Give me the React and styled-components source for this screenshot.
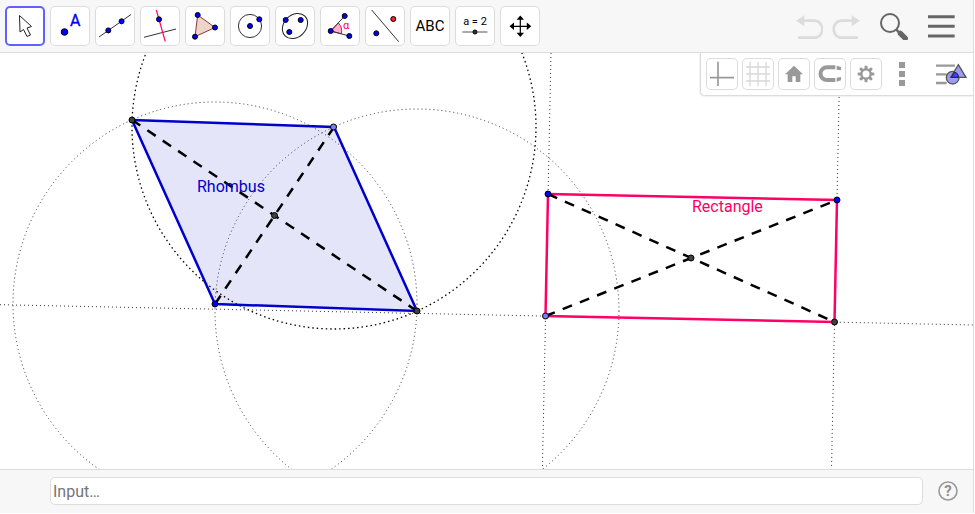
import React from 'react'
import styled, { createGlobalStyle } from 'styled-components';

const BLUE = '#0000ff';
const DARK = '#404040';
const LIGHT = '#7d7dff';
const PINK = '#ff0066';

const Dot = ({ x, y, r = 2.5, fill = BLUE }) => (
    <circle cx={x} cy={y} r={r} fill={fill} stroke="#000" strokeWidth="1" />
)

const tools = [
    {
        name: 'Move',
        icon: <path d="M14.5 9.5 L15 26 L18.5 23.5 L22 30.5 L25.5 29 L22 22 L26.5 20.5 Z" fill="#fff" stroke="#222" strokeWidth="1" />,
    },
    {
        name: 'Point',
        icon: <>
            <Dot x={14.5} y={26} r={3.3} />
            <text x="20" y="20" fontSize="16" fill="#0000ee" stroke="#0000ee" strokeWidth="0.3">A</text>
        </>,
    },
    {
        name: 'Line',
        icon: <>
            <path d="M4 31 L36 8.5" stroke="#333" />
            <Dot x={13.3} y={24.4} />
            <Dot x={26.6} y={15.3} />
        </>,
    },
    {
        name: 'Perpendicular Line',
        icon: <>
            <path d="M4 31.3 L36 23" stroke="#333" />
            <path d="M16.3 4 L25.3 35.7" stroke={PINK} strokeWidth="1.2" />
            <Dot x={19} y={13.3} />
        </>,
    },
    {
        name: 'Polygon',
        icon: <>
            <path d="M12.7 9 L30 21.5 L10 30.7 Z" fill="#993300" fillOpacity="0.2" stroke="#993333" />
            <Dot x={12.7} y={9} />
            <Dot x={30} y={21.5} />
            <Dot x={10} y={30.7} />
        </>,
    },
    {
        name: 'Circle with Center through Point',
        icon: <>
            <circle cx="20" cy="20" r="11.6" fill="none" stroke="#333" />
            <Dot x={20} y={20} />
            <Dot x={29.3} y={13.3} />
        </>,
    },
    {
        name: 'Ellipse',
        icon: <>
            <ellipse cx="20" cy="20" rx="14" ry="11" transform="rotate(-45 20 20)" fill="none" stroke="#222" />
            <Dot x={10.7} y={14} />
            <Dot x={25.7} y={14} />
            <Dot x={14.3} y={26} />
        </>,
    },
    {
        name: 'Angle',
        icon: <>
            <path d="M10.7 25 L18.2 17 A11 11 0 0 1 21.3 27.8 Z" fill="#ffb3cc" stroke={PINK} />
            <path d="M24.7 10 L10.7 25 L29.3 30" fill="none" stroke="#333" />
            <text x="23" y="23" fontSize="11" fill="#ff0044">α</text>
            <Dot x={24.7} y={10} />
            <Dot x={10.7} y={25} />
            <Dot x={29.3} y={30} />
        </>,
    },
    {
        name: 'Reflect about Line',
        icon: <>
            <path d="M6.7 4 L33.7 35.7" stroke="#333" />
            <Dot x={11.3} y={27.3} />
            <Dot x={28.3} y={13} fill="#ff2222" />
        </>,
    },
    {
        name: 'Text',
        icon: <text x="20" y="25" fontSize="15" textAnchor="middle" fill="#000">ABC</text>,
    },
    {
        name: 'Slider',
        icon: <>
            <text x="20" y="19" fontSize="11" textAnchor="middle" fill="#000">a = 2</text>
            <path d="M7.3 26 H32.5" stroke="#555" />
            <Dot x={20} y={26} r={2} fill="#333" />
        </>,
    },
    {
        name: 'Move Graphics View',
        icon: <>
            <path d="M12 20.3 H29 M20.3 12 V29" stroke="#000" strokeWidth="1.2" />
            <path d="M9.5 20.3 L14 16.6 V24 Z M31.3 20.3 L26.8 16.6 V24 Z M20.3 9.5 L16.6 13.8 H24 Z M20.3 31 L16.6 26.8 H24 Z" />
        </>,
    },
];

const viewTools = [
    {
        name: 'Axes',
        icon: <path d="M84 50 V123 M60 98 H132" stroke="#999" strokeWidth="5" />,
    },
    {
        name: 'Grid',
        icon: <path d="M180 51 V124 M204 51 V124 M228 51 V124 M168 66 H240 M168 87 H240 M168 108 H240" stroke="#d8d8d8" strokeWidth="4" />,
    },
    {
        name: 'Standard View',
        icon: <path d="M312 62 L339 88 H331 V111 H317 V94 H307 V111 H293 V88 H285 Z" fill="#999" />,
    },
    {
        name: 'Point Capturing',
        icon: <>
            <path d="M436 67 H414 C384 65 384 107 414 105 H436" fill="none" stroke="#999" strokeWidth="12" />
            <path d="M440 62 L453 66 V76 L440 74 Z M440 98 L453 96 V106 L440 110 Z" fill="#999" />
        </>,
    },
    {
        name: 'Settings',
        icon: <>
            <circle cx="528" cy="87" r="14" fill="none" stroke="#999" strokeWidth="7" />
            {[0, 45, 90, 135, 180, 225, 270, 315].map(a => (
                <path key={a} d="M524 62 H532 L533 73 H523 Z" fill="#999" transform={`rotate(${a} 528 87)`} />
            ))}
        </>,
    },
];

export default function App() {
    return (
        <Page>
            <GlobalStyle />
            <Toolbar>
                <ToolList>
                    {tools.map((t, i) => (
                        <ToolButton key={t.name} aria-label={t.name} $active={i === 0}>
                            <svg width="40" height="40" viewBox="0 0 40 40">{t.icon}</svg>
                        </ToolButton>
                    ))}
                </ToolList>
                <Actions>
                    <UndoGroup>
                        <ActionButton aria-label="Undo">
                            <svg width="28" height="28" viewBox="45 36 84 84">
                                <path d="M48 62 L73 46 V79 Z" fill="#dcdcdc" />
                                <path d="M70 62 H102 C135 62 135 113 102 113 H54" fill="none" stroke="#dcdcdc" strokeWidth="8" />
                            </svg>
                        </ActionButton>
                        <ActionButton aria-label="Redo">
                            <svg width="28" height="28" viewBox="159 36 84 84">
                                <path d="M243 62 L218 46 V79 Z" fill="#dcdcdc" />
                                <path d="M221 62 H189 C156 62 156 113 189 113 H237" fill="none" stroke="#dcdcdc" strokeWidth="8" />
                            </svg>
                        </ActionButton>
                    </UndoGroup>
                    <ActionButton aria-label="Search">
                        <svg width="28" height="28" viewBox="300 36 84 84">
                            <circle cx="330" cy="69" r="27" fill="none" stroke="#666" strokeWidth="6" />
                            <path d="M349 89 L360 100" stroke="#666" strokeWidth="7" />
                            <path d="M361 100 L376 115" stroke="#666" strokeWidth="16" strokeLinecap="round" />
                        </svg>
                    </ActionButton>
                    <ActionButton aria-label="Menu">
                        <svg width="28" height="28" viewBox="444 36 84 84">
                            <path d="M444 50 H524 M444 79 H524 M444 108 H524" stroke="#666" strokeWidth="9" />
                        </svg>
                    </ActionButton>
                </Actions>
            </Toolbar>

            <Graphics>
                <Drawing />
                <StyleBar>
                    {viewTools.map((t, i) => (
                        <StyleButton key={t.name} aria-label={t.name}>
                            <svg width="32" height="32" viewBox={`${48 + 108 * i} 39 96 96`}>{t.icon}</svg>
                        </StyleButton>
                    ))}
                    <PlainButton aria-label="More">
                        <svg width="32" height="32" viewBox="588 39 96 96">
                            <path d="M627 51 h18 v18 h-18 Z M627 78 h18 v18 h-18 Z M627 105 h18 v18 h-18 Z" fill="#999" />
                        </svg>
                    </PlainButton>
                    <PlainButton aria-label="Toggle Style Bar" $wide>
                        <svg width="32" height="32" viewBox="738 39 96 96">
                            <path d="M738 62 H795 M738 88 H770 M738 114 H770" stroke="#999" strokeWidth="7" />
                            <circle cx="788" cy="98" r="19" fill="#9c9cf5" stroke="#555" strokeWidth="4" />
                            <path d="M805 59 L828 97 H782 Z" fill="#9c9cf5" stroke="#555" strokeWidth="4" />
                            <path d="M794 81 Q805 84 806 97 H784 Z" fill="#4040ff" stroke="#222" strokeWidth="3" />
                        </svg>
                    </PlainButton>
                </StyleBar>
            </Graphics>

            <InputBar>
                <AlgebraInput aria-label="Input" placeholder="Input…" />
                <HelpButton aria-label="Help">
                    <svg width="22" height="22" viewBox="0 0 22 22">
                        <circle cx="11" cy="11" r="9" fill="none" stroke="#999" strokeWidth="1.6" />
                        <text x="11" y="16" fontSize="15" fontWeight="700" textAnchor="middle" fill="#909090">?</text>
                    </svg>
                </HelpButton>
            </InputBar>
        </Page>
    )
}

function Drawing() {
    return (
        <Canvas>
            <g transform="translate(0 -53)">
                <path d="M132 120 L334 127 L417 311 L215 304 Z" fill="#0000cc" fillOpacity="0.1" />

                {/* construction lines */}
                <g fill="none" stroke="#333" strokeWidth="1" strokeDasharray="1 3">
                    <circle cx="215" cy="304" r="202" />
                    <circle cx="417" cy="311" r="202" />
                    <path d="M0 304.7 L973 325" />
                    <path d="M551 53 L542.4 469" />
                    <path d="M840 53 L831.5 469" />
                </g>
                <circle cx="334" cy="127" r="202" fill="none" stroke="#000" strokeWidth="1.3" strokeDasharray="1.5 3" />

                <path d="M132 120 L334 127 L417 311 L215 304 Z" fill="none" stroke="#0000cc" strokeWidth="2.5" />
                <path d="M548 194 L837 200 L834.5 322 L545.5 316 Z" fill="none" stroke={PINK} strokeWidth="2.5" />

                {/* diagonals */}
                <g stroke="#000" strokeWidth="2.5" strokeDasharray="10 8.5">
                    <path d="M132 120 L417 311" />
                    <path d="M215 304 L334 127" />
                    <path d="M548 194 L834.5 322" />
                    <path d="M545.5 316 L837 200" />
                </g>

                <Dot x={132} y={120} r={3} fill={DARK} />
                <Dot x={333.5} y={127} r={3} fill={LIGHT} />
                <Dot x={417} y={311} r={3} fill={DARK} />
                <Dot x={215} y={304} r={3} />
                <Dot x={274.5} y={215.5} r={3} fill={DARK} />
                <Dot x={548} y={194} r={3} />
                <Dot x={837} y={200} r={3} />
                <Dot x={834.5} y={322} r={3} fill={DARK} />
                <Dot x={545.5} y={316} r={3} fill={LIGHT} />
                <Dot x={691} y={258} r={3} fill={DARK} />

                <text x="197" y="192" fontSize="16" fill="#0000cc">Rhombus</text>
                <text x="692" y="212" fontSize="16" fill={PINK}>Rectangle</text>
            </g>
        </Canvas>
    )
}

const GlobalStyle = createGlobalStyle`
    body{
        margin:0;
        background:#fff;
        font-family:Roboto, sans-serif;
    }
    *{
        box-sizing:border-box;
    }
    svg{
        display:block;
    }
    svg text{
        font-family:Roboto, sans-serif;
    }
`

const Page = styled.div`
    display:flex;
    flex-direction:column;
    height:calc(100vh - 1px);
    margin-right:1px;
    border-right:1px solid #dcdcdc;
`

const Toolbar = styled.header`
    display:flex;
    justify-content:space-between;
    align-items:center;
    padding:6px 17px 6px 5px;
    background:#f7f7f7;
    border-bottom:1px solid #dcdcdc;
`

const ToolList = styled.div`
    display:flex;
    gap:5px;
`

const BaseButton = styled.button`
    padding:0;
    border:none;
    background:transparent;
    cursor:pointer;
`

const ToolButton = styled(BaseButton)`
    width:40px;
    height:40px;
    border-radius:5px;
    background:#fff;
    box-shadow:inset 0 0 0 ${p => p.$active ? '2px #6161ff' : '1px #dcdcdc'};
`

const Actions = styled.div`
    display:flex;
    gap:20px;
`

const UndoGroup = styled.div`
    display:flex;
    gap:9px;
`

const ActionButton = styled(BaseButton)`
    width:28px;
    height:28px;
`

const Graphics = styled.main`
    position:relative;
    flex:1;
    min-height:0;
    overflow:hidden;
    background:#fff;
`

const Canvas = styled.svg`
    width:100%;
    height:100%;
`

/* floats over the top right corner of the drawing */
const StyleBar = styled.div`
    position:absolute;
    top:0;
    right:0;
    display:flex;
    gap:4px;
    padding:5px;
    background:#fff;
    border:1px solid #dcdcdc;
    border-width:0 0 1px 1px;
    border-radius:0 0 0 5px;
    box-shadow:0 0 2px rgba(0,0,0,0.2);
`

const StyleButton = styled(BaseButton)`
    width:32px;
    height:32px;
    border-radius:5px;
    box-shadow:inset 0 0 0 1px #dcdcdc;
`

const PlainButton = styled(BaseButton)`
    display:flex;
    justify-content:flex-end;
    width:${p => p.$wide ? '46px' : '32px'};
    height:32px;
`

const InputBar = styled.footer`
    display:flex;
    align-items:center;
    gap:14px;
    padding:7px 14px 8px 50px;
    background:#f7f7f7;
    border-top:1px solid #dcdcdc;
`

const AlgebraInput = styled.input`
    flex:1;
    min-width:0;
    height:28px;
    padding:0 2px;
    border:1px solid #dcdcdc;
    border-radius:5px;
    background:#fff;
    color:#333;
    font-family:Roboto, sans-serif;
    font-size:16px;
    &::placeholder{
        color:#757575;
    }
`

const HelpButton = styled(BaseButton)`
    width:22px;
    height:22px;
`
